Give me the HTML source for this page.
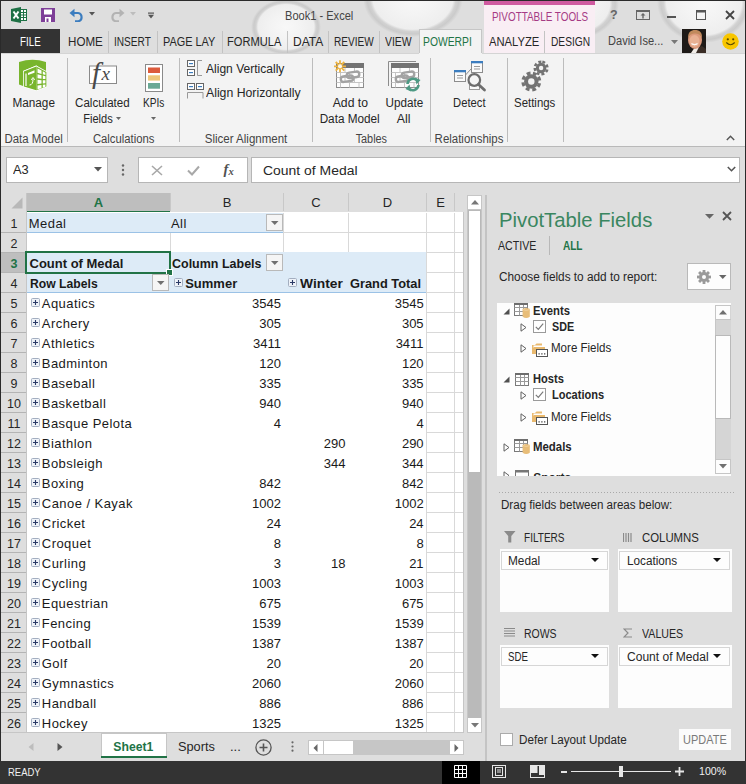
<!DOCTYPE html>
<html><head><meta charset="utf-8"><title>Book1 - Excel</title>
<style>
html,body{margin:0;padding:0;}
body{width:746px;height:784px;position:relative;overflow:hidden;background:#dedede;font-family:"Liberation Sans", sans-serif;}

</style></head><body>
<div style="position:absolute;left:1px;top:147px;width:744px;height:614px;background:#dedede;"></div>
<div style="position:absolute;left:6px;top:157px;width:102px;height:26px;background:#fff;box-sizing:border-box;border:1px solid #b6b6b6;"></div>
<div style="position:absolute;top:164.22px;font-size:12.5px;line-height:12.5px;color:#262626;white-space:pre;left:13px;transform:scaleX(1.0264);transform-origin:0 0;">A3</div>
<svg style="position:absolute;left:94px;top:167px;" width="8" height="5" viewBox="0 0 8 5"><path d="M0 0 H8 L4 4.5 Z" fill="#555"/></svg>
<svg style="position:absolute;left:121px;top:164px;" width="4" height="12" viewBox="0 0 4 12"><circle cx="2" cy="1.5" r="1.2" fill="#666"/><circle cx="2" cy="6" r="1.2" fill="#666"/><circle cx="2" cy="10.5" r="1.2" fill="#666"/></svg>
<div style="position:absolute;left:138px;top:157px;width:110px;height:26px;background:#fff;box-sizing:border-box;border:1px solid #b6b6b6;"></div>
<svg style="position:absolute;left:151px;top:165px;" width="12" height="11" viewBox="0 0 12 11"><path d="M1 1 L11 10 M11 1 L1 10" stroke="#a8a8a8" stroke-width="1.6"/></svg>
<svg style="position:absolute;left:187px;top:165px;" width="13" height="11" viewBox="0 0 13 11"><path d="M1 5.5 L5 9.5 L12 1.5" stroke="#a8a8a8" stroke-width="2" fill="none"/></svg>
<div style="position:absolute;top:162.23px;font-size:14.5px;line-height:14.5px;color:#505050;white-space:pre;font-weight:bold;left:223.5px;font-family:'Liberation Serif', serif;"><i>f</i></div>
<div style="position:absolute;top:166.61px;font-size:10.5px;line-height:10.5px;color:#505050;white-space:pre;font-weight:bold;left:228.5px;font-family:'Liberation Serif', serif;"><i>x</i></div>
<div style="position:absolute;left:251px;top:157px;width:489px;height:26px;background:#fff;box-sizing:border-box;border:1px solid #b6b6b6;"></div>
<div style="position:absolute;top:164.62px;font-size:12.5px;line-height:12.5px;color:#262626;white-space:pre;left:262.8px;transform:scaleX(1.1146);transform-origin:0 0;">Count of Medal</div>
<svg style="position:absolute;left:727px;top:166px;" width="9" height="6" viewBox="0 0 9 6"><path d="M0.8 1 L4.5 4.7 L8.2 1" stroke="#555" stroke-width="1.6" fill="none"/></svg>
<div style="position:absolute;left:1px;top:193px;width:462px;height:19px;background:#dedede;"></div>
<div style="position:absolute;left:1px;top:193px;width:25px;height:19px;background:#dedede;"></div>
<svg style="position:absolute;left:11px;top:197px;" width="12" height="12" viewBox="0 0 12 12"><path d="M11.5 0.5 V11.5 H0.5 Z" fill="#b8b8b8"/></svg>
<div style="position:absolute;left:26px;top:193px;width:144px;height:18px;background:#bebebe;"></div>
<div style="position:absolute;left:1px;top:212px;width:462px;height:1px;background:#b4b4b4;"></div>
<div style="position:absolute;left:26px;top:211px;width:144px;height:2px;background:#217346;"></div>
<div style="position:absolute;left:170px;top:193px;width:1px;height:18px;background:#c8c8c8;"></div>
<div style="position:absolute;left:283px;top:193px;width:1px;height:18px;background:#c8c8c8;"></div>
<div style="position:absolute;left:348px;top:193px;width:1px;height:18px;background:#c8c8c8;"></div>
<div style="position:absolute;left:426px;top:193px;width:1px;height:18px;background:#c8c8c8;"></div>
<div style="position:absolute;left:454px;top:193px;width:1px;height:18px;background:#c8c8c8;"></div>
<div style="position:absolute;left:26px;top:193px;width:1px;height:540px;background:#c6c6c6;"></div>
<div style="position:absolute;top:195.80px;font-size:13px;line-height:13px;color:#217346;white-space:pre;font-weight:bold;left:-201.5px;width:600px;text-align:center;">A</div>
<div style="position:absolute;top:195.80px;font-size:13px;line-height:13px;color:#262626;white-space:pre;left:-73.0px;width:600px;text-align:center;">B</div>
<div style="position:absolute;top:195.80px;font-size:13px;line-height:13px;color:#262626;white-space:pre;left:16.0px;width:600px;text-align:center;">C</div>
<div style="position:absolute;top:195.80px;font-size:13px;line-height:13px;color:#262626;white-space:pre;left:87.5px;width:600px;text-align:center;">D</div>
<div style="position:absolute;top:195.80px;font-size:13px;line-height:13px;color:#262626;white-space:pre;left:140.5px;width:600px;text-align:center;">E</div>
<div style="position:absolute;left:27px;top:212px;width:436px;height:521px;background:#ffffff;"></div>
<div style="position:absolute;left:1px;top:212px;width:25px;height:521px;background:#dedede;"></div>
<div style="position:absolute;left:1px;top:253px;width:25px;height:19px;background:#bebebe;"></div>
<div style="position:absolute;left:1px;top:232px;width:25px;height:1px;background:#b4b4b4;"></div>
<div style="position:absolute;top:218.22px;font-size:12.5px;line-height:12.5px;color:#262626;white-space:pre;left:-286px;width:600px;text-align:center;">1</div>
<div style="position:absolute;left:1px;top:252px;width:25px;height:1px;background:#b4b4b4;"></div>
<div style="position:absolute;top:238.22px;font-size:12.5px;line-height:12.5px;color:#262626;white-space:pre;left:-286px;width:600px;text-align:center;">2</div>
<div style="position:absolute;left:1px;top:272px;width:25px;height:1px;background:#b4b4b4;"></div>
<div style="position:absolute;top:258.22px;font-size:12.5px;line-height:12.5px;color:#217346;white-space:pre;font-weight:bold;left:-286px;width:600px;text-align:center;">3</div>
<div style="position:absolute;left:1px;top:292px;width:25px;height:1px;background:#b4b4b4;"></div>
<div style="position:absolute;top:278.22px;font-size:12.5px;line-height:12.5px;color:#262626;white-space:pre;left:-286px;width:600px;text-align:center;">4</div>
<div style="position:absolute;left:1px;top:312px;width:25px;height:1px;background:#b4b4b4;"></div>
<div style="position:absolute;top:298.22px;font-size:12.5px;line-height:12.5px;color:#262626;white-space:pre;left:-286px;width:600px;text-align:center;">5</div>
<div style="position:absolute;left:1px;top:332px;width:25px;height:1px;background:#b4b4b4;"></div>
<div style="position:absolute;top:318.22px;font-size:12.5px;line-height:12.5px;color:#262626;white-space:pre;left:-286px;width:600px;text-align:center;">6</div>
<div style="position:absolute;left:1px;top:352px;width:25px;height:1px;background:#b4b4b4;"></div>
<div style="position:absolute;top:338.22px;font-size:12.5px;line-height:12.5px;color:#262626;white-space:pre;left:-286px;width:600px;text-align:center;">7</div>
<div style="position:absolute;left:1px;top:372px;width:25px;height:1px;background:#b4b4b4;"></div>
<div style="position:absolute;top:358.22px;font-size:12.5px;line-height:12.5px;color:#262626;white-space:pre;left:-286px;width:600px;text-align:center;">8</div>
<div style="position:absolute;left:1px;top:392px;width:25px;height:1px;background:#b4b4b4;"></div>
<div style="position:absolute;top:378.22px;font-size:12.5px;line-height:12.5px;color:#262626;white-space:pre;left:-286px;width:600px;text-align:center;">9</div>
<div style="position:absolute;left:1px;top:412px;width:25px;height:1px;background:#b4b4b4;"></div>
<div style="position:absolute;top:398.22px;font-size:12.5px;line-height:12.5px;color:#262626;white-space:pre;left:-286px;width:600px;text-align:center;">10</div>
<div style="position:absolute;left:1px;top:432px;width:25px;height:1px;background:#b4b4b4;"></div>
<div style="position:absolute;top:418.22px;font-size:12.5px;line-height:12.5px;color:#262626;white-space:pre;left:-286px;width:600px;text-align:center;">11</div>
<div style="position:absolute;left:1px;top:452px;width:25px;height:1px;background:#b4b4b4;"></div>
<div style="position:absolute;top:438.22px;font-size:12.5px;line-height:12.5px;color:#262626;white-space:pre;left:-286px;width:600px;text-align:center;">12</div>
<div style="position:absolute;left:1px;top:472px;width:25px;height:1px;background:#b4b4b4;"></div>
<div style="position:absolute;top:458.22px;font-size:12.5px;line-height:12.5px;color:#262626;white-space:pre;left:-286px;width:600px;text-align:center;">13</div>
<div style="position:absolute;left:1px;top:492px;width:25px;height:1px;background:#b4b4b4;"></div>
<div style="position:absolute;top:478.22px;font-size:12.5px;line-height:12.5px;color:#262626;white-space:pre;left:-286px;width:600px;text-align:center;">14</div>
<div style="position:absolute;left:1px;top:512px;width:25px;height:1px;background:#b4b4b4;"></div>
<div style="position:absolute;top:498.22px;font-size:12.5px;line-height:12.5px;color:#262626;white-space:pre;left:-286px;width:600px;text-align:center;">15</div>
<div style="position:absolute;left:1px;top:532px;width:25px;height:1px;background:#b4b4b4;"></div>
<div style="position:absolute;top:518.22px;font-size:12.5px;line-height:12.5px;color:#262626;white-space:pre;left:-286px;width:600px;text-align:center;">16</div>
<div style="position:absolute;left:1px;top:552px;width:25px;height:1px;background:#b4b4b4;"></div>
<div style="position:absolute;top:538.22px;font-size:12.5px;line-height:12.5px;color:#262626;white-space:pre;left:-286px;width:600px;text-align:center;">17</div>
<div style="position:absolute;left:1px;top:572px;width:25px;height:1px;background:#b4b4b4;"></div>
<div style="position:absolute;top:558.22px;font-size:12.5px;line-height:12.5px;color:#262626;white-space:pre;left:-286px;width:600px;text-align:center;">18</div>
<div style="position:absolute;left:1px;top:592px;width:25px;height:1px;background:#b4b4b4;"></div>
<div style="position:absolute;top:578.22px;font-size:12.5px;line-height:12.5px;color:#262626;white-space:pre;left:-286px;width:600px;text-align:center;">19</div>
<div style="position:absolute;left:1px;top:612px;width:25px;height:1px;background:#b4b4b4;"></div>
<div style="position:absolute;top:598.22px;font-size:12.5px;line-height:12.5px;color:#262626;white-space:pre;left:-286px;width:600px;text-align:center;">20</div>
<div style="position:absolute;left:1px;top:632px;width:25px;height:1px;background:#b4b4b4;"></div>
<div style="position:absolute;top:618.22px;font-size:12.5px;line-height:12.5px;color:#262626;white-space:pre;left:-286px;width:600px;text-align:center;">21</div>
<div style="position:absolute;left:1px;top:652px;width:25px;height:1px;background:#b4b4b4;"></div>
<div style="position:absolute;top:638.22px;font-size:12.5px;line-height:12.5px;color:#262626;white-space:pre;left:-286px;width:600px;text-align:center;">22</div>
<div style="position:absolute;left:1px;top:672px;width:25px;height:1px;background:#b4b4b4;"></div>
<div style="position:absolute;top:658.22px;font-size:12.5px;line-height:12.5px;color:#262626;white-space:pre;left:-286px;width:600px;text-align:center;">23</div>
<div style="position:absolute;left:1px;top:692px;width:25px;height:1px;background:#b4b4b4;"></div>
<div style="position:absolute;top:678.22px;font-size:12.5px;line-height:12.5px;color:#262626;white-space:pre;left:-286px;width:600px;text-align:center;">24</div>
<div style="position:absolute;left:1px;top:712px;width:25px;height:1px;background:#b4b4b4;"></div>
<div style="position:absolute;top:698.22px;font-size:12.5px;line-height:12.5px;color:#262626;white-space:pre;left:-286px;width:600px;text-align:center;">25</div>
<div style="position:absolute;left:1px;top:732px;width:25px;height:1px;background:#b4b4b4;"></div>
<div style="position:absolute;top:718.22px;font-size:12.5px;line-height:12.5px;color:#262626;white-space:pre;left:-286px;width:600px;text-align:center;">26</div>
<div style="position:absolute;left:283px;top:232px;width:180px;height:1px;background:#d9d9d9;"></div>
<div style="position:absolute;left:27px;top:252px;width:436px;height:1px;background:#d9d9d9;"></div>
<div style="position:absolute;left:427px;top:272px;width:36px;height:1px;background:#d9d9d9;"></div>
<div style="position:absolute;left:427px;top:292px;width:36px;height:1px;background:#d9d9d9;"></div>
<div style="position:absolute;left:427px;top:312px;width:36px;height:1px;background:#d9d9d9;"></div>
<div style="position:absolute;left:427px;top:332px;width:36px;height:1px;background:#d9d9d9;"></div>
<div style="position:absolute;left:427px;top:352px;width:36px;height:1px;background:#d9d9d9;"></div>
<div style="position:absolute;left:427px;top:372px;width:36px;height:1px;background:#d9d9d9;"></div>
<div style="position:absolute;left:427px;top:392px;width:36px;height:1px;background:#d9d9d9;"></div>
<div style="position:absolute;left:427px;top:412px;width:36px;height:1px;background:#d9d9d9;"></div>
<div style="position:absolute;left:427px;top:432px;width:36px;height:1px;background:#d9d9d9;"></div>
<div style="position:absolute;left:427px;top:452px;width:36px;height:1px;background:#d9d9d9;"></div>
<div style="position:absolute;left:427px;top:472px;width:36px;height:1px;background:#d9d9d9;"></div>
<div style="position:absolute;left:427px;top:492px;width:36px;height:1px;background:#d9d9d9;"></div>
<div style="position:absolute;left:427px;top:512px;width:36px;height:1px;background:#d9d9d9;"></div>
<div style="position:absolute;left:427px;top:532px;width:36px;height:1px;background:#d9d9d9;"></div>
<div style="position:absolute;left:427px;top:552px;width:36px;height:1px;background:#d9d9d9;"></div>
<div style="position:absolute;left:427px;top:572px;width:36px;height:1px;background:#d9d9d9;"></div>
<div style="position:absolute;left:427px;top:592px;width:36px;height:1px;background:#d9d9d9;"></div>
<div style="position:absolute;left:427px;top:612px;width:36px;height:1px;background:#d9d9d9;"></div>
<div style="position:absolute;left:427px;top:632px;width:36px;height:1px;background:#d9d9d9;"></div>
<div style="position:absolute;left:427px;top:652px;width:36px;height:1px;background:#d9d9d9;"></div>
<div style="position:absolute;left:427px;top:672px;width:36px;height:1px;background:#d9d9d9;"></div>
<div style="position:absolute;left:427px;top:692px;width:36px;height:1px;background:#d9d9d9;"></div>
<div style="position:absolute;left:427px;top:712px;width:36px;height:1px;background:#d9d9d9;"></div>
<div style="position:absolute;left:427px;top:732px;width:36px;height:1px;background:#d9d9d9;"></div>
<div style="position:absolute;left:170px;top:233px;width:1px;height:19px;background:#d9d9d9;"></div>
<div style="position:absolute;left:283px;top:213px;width:1px;height:39px;background:#d9d9d9;"></div>
<div style="position:absolute;left:348px;top:213px;width:1px;height:39px;background:#d9d9d9;"></div>
<div style="position:absolute;left:426px;top:213px;width:1px;height:39px;background:#d9d9d9;"></div>
<div style="position:absolute;left:426px;top:253px;width:1px;height:480px;background:#d9d9d9;"></div>
<div style="position:absolute;left:454px;top:213px;width:1px;height:520px;background:#d9d9d9;"></div>
<div style="position:absolute;left:27px;top:213px;width:256px;height:19px;background:#ddebf7;"></div>
<div style="position:absolute;left:27px;top:232px;width:256px;height:1px;background:#9bc2e6;"></div>
<div style="position:absolute;left:27px;top:252px;width:399px;height:40px;background:#ddebf7;"></div>
<div style="position:absolute;left:27px;top:292px;width:399px;height:1px;background:#9bc2e6;"></div>
<div style="position:absolute;left:25px;top:251px;width:146px;height:23px;box-sizing:border-box;border:2px solid #217346;"></div>
<div style="position:absolute;left:167px;top:270px;width:5px;height:5px;background:#217346;outline:1px solid #fff;"></div>
<div style="position:absolute;left:266px;top:214px;width:17px;height:17px;background:#f5f5f5;box-sizing:border-box;border:1px solid #b9b9b9;"></div>
<svg style="position:absolute;left:271px;top:221px;" width="8" height="4" viewBox="0 0 8 4"><path d="M0 0 H7.5 L3.75 4 Z" fill="#707070"/></svg>
<div style="position:absolute;left:266px;top:254px;width:17px;height:17px;background:#f5f5f5;box-sizing:border-box;border:1px solid #b9b9b9;"></div>
<svg style="position:absolute;left:271px;top:261px;" width="8" height="4" viewBox="0 0 8 4"><path d="M0 0 H7.5 L3.75 4 Z" fill="#707070"/></svg>
<div style="position:absolute;left:152px;top:274px;width:17px;height:17px;background:#f5f5f5;box-sizing:border-box;border:1px solid #b9b9b9;"></div>
<svg style="position:absolute;left:157px;top:281px;" width="8" height="4" viewBox="0 0 8 4"><path d="M0 0 H7.5 L3.75 4 Z" fill="#707070"/></svg>
<div style="position:absolute;top:216.80px;font-size:13px;line-height:13px;color:#1a1a1a;white-space:pre;letter-spacing:0.45px;left:28.8px;">Medal</div>
<div style="position:absolute;top:216.80px;font-size:13px;line-height:13px;color:#1a1a1a;white-space:pre;letter-spacing:0.45px;left:171px;">All</div>
<div style="position:absolute;top:256.80px;font-size:13px;line-height:13px;color:#1a1a1a;white-space:pre;font-weight:bold;left:29.5px;">Count of Medal</div>
<div style="position:absolute;top:256.80px;font-size:13px;line-height:13px;color:#1a1a1a;white-space:pre;font-weight:bold;left:172.1px;transform:scaleX(0.9604);transform-origin:0 0;">Column Labels</div>
<div style="position:absolute;top:276.80px;font-size:13px;line-height:13px;color:#1a1a1a;white-space:pre;font-weight:bold;left:29.5px;transform:scaleX(0.9370);transform-origin:0 0;">Row Labels</div>
<svg style="position:absolute;left:174px;top:278px;" width="9" height="9" viewBox="0 0 9 9"><rect x="0.5" y="0.5" width="8" height="8" rx="1" fill="#eef2f8" stroke="#a3aec0"/><path d="M2 4.5 H7 M4.5 2 V7" stroke="#2b3a67" stroke-width="1.1"/></svg>
<div style="position:absolute;top:276.80px;font-size:13px;line-height:13px;color:#1a1a1a;white-space:pre;font-weight:bold;left:185.2px;">Summer</div>
<svg style="position:absolute;left:288px;top:278px;" width="9" height="9" viewBox="0 0 9 9"><rect x="0.5" y="0.5" width="8" height="8" rx="1" fill="#eef2f8" stroke="#a3aec0"/><path d="M2 4.5 H7 M4.5 2 V7" stroke="#2b3a67" stroke-width="1.1"/></svg>
<div style="position:absolute;top:276.80px;font-size:13px;line-height:13px;color:#1a1a1a;white-space:pre;font-weight:bold;left:299.7px;transform:scaleX(1.0613);transform-origin:0 0;">Winter</div>
<div style="position:absolute;top:276.80px;font-size:13px;line-height:13px;color:#1a1a1a;white-space:pre;font-weight:bold;right:324.6px;text-align:right;transform:scaleX(0.9863);transform-origin:100% 0;">Grand Total</div>
<svg style="position:absolute;left:31px;top:298px;" width="9" height="9" viewBox="0 0 9 9"><rect x="0.5" y="0.5" width="8" height="8" rx="1" fill="#eef2f8" stroke="#a3aec0"/><path d="M2 4.5 H7 M4.5 2 V7" stroke="#2b3a67" stroke-width="1.1"/></svg>
<div style="position:absolute;top:296.80px;font-size:13px;line-height:13px;color:#1a1a1a;white-space:pre;letter-spacing:0.45px;left:41.8px;">Aquatics</div>
<div style="position:absolute;top:296.80px;font-size:13px;line-height:13px;color:#1a1a1a;white-space:pre;right:465px;text-align:right;">3545</div>
<div style="position:absolute;top:296.80px;font-size:13px;line-height:13px;color:#1a1a1a;white-space:pre;right:322.4px;text-align:right;">3545</div>
<svg style="position:absolute;left:31px;top:318px;" width="9" height="9" viewBox="0 0 9 9"><rect x="0.5" y="0.5" width="8" height="8" rx="1" fill="#eef2f8" stroke="#a3aec0"/><path d="M2 4.5 H7 M4.5 2 V7" stroke="#2b3a67" stroke-width="1.1"/></svg>
<div style="position:absolute;top:316.80px;font-size:13px;line-height:13px;color:#1a1a1a;white-space:pre;letter-spacing:0.45px;left:41.8px;">Archery</div>
<div style="position:absolute;top:316.80px;font-size:13px;line-height:13px;color:#1a1a1a;white-space:pre;right:465px;text-align:right;">305</div>
<div style="position:absolute;top:316.80px;font-size:13px;line-height:13px;color:#1a1a1a;white-space:pre;right:322.4px;text-align:right;">305</div>
<svg style="position:absolute;left:31px;top:338px;" width="9" height="9" viewBox="0 0 9 9"><rect x="0.5" y="0.5" width="8" height="8" rx="1" fill="#eef2f8" stroke="#a3aec0"/><path d="M2 4.5 H7 M4.5 2 V7" stroke="#2b3a67" stroke-width="1.1"/></svg>
<div style="position:absolute;top:336.80px;font-size:13px;line-height:13px;color:#1a1a1a;white-space:pre;letter-spacing:0.45px;left:41.8px;">Athletics</div>
<div style="position:absolute;top:336.80px;font-size:13px;line-height:13px;color:#1a1a1a;white-space:pre;right:465px;text-align:right;">3411</div>
<div style="position:absolute;top:336.80px;font-size:13px;line-height:13px;color:#1a1a1a;white-space:pre;right:322.4px;text-align:right;">3411</div>
<svg style="position:absolute;left:31px;top:358px;" width="9" height="9" viewBox="0 0 9 9"><rect x="0.5" y="0.5" width="8" height="8" rx="1" fill="#eef2f8" stroke="#a3aec0"/><path d="M2 4.5 H7 M4.5 2 V7" stroke="#2b3a67" stroke-width="1.1"/></svg>
<div style="position:absolute;top:356.80px;font-size:13px;line-height:13px;color:#1a1a1a;white-space:pre;letter-spacing:0.45px;left:41.8px;">Badminton</div>
<div style="position:absolute;top:356.80px;font-size:13px;line-height:13px;color:#1a1a1a;white-space:pre;right:465px;text-align:right;">120</div>
<div style="position:absolute;top:356.80px;font-size:13px;line-height:13px;color:#1a1a1a;white-space:pre;right:322.4px;text-align:right;">120</div>
<svg style="position:absolute;left:31px;top:378px;" width="9" height="9" viewBox="0 0 9 9"><rect x="0.5" y="0.5" width="8" height="8" rx="1" fill="#eef2f8" stroke="#a3aec0"/><path d="M2 4.5 H7 M4.5 2 V7" stroke="#2b3a67" stroke-width="1.1"/></svg>
<div style="position:absolute;top:376.80px;font-size:13px;line-height:13px;color:#1a1a1a;white-space:pre;letter-spacing:0.45px;left:41.8px;">Baseball</div>
<div style="position:absolute;top:376.80px;font-size:13px;line-height:13px;color:#1a1a1a;white-space:pre;right:465px;text-align:right;">335</div>
<div style="position:absolute;top:376.80px;font-size:13px;line-height:13px;color:#1a1a1a;white-space:pre;right:322.4px;text-align:right;">335</div>
<svg style="position:absolute;left:31px;top:398px;" width="9" height="9" viewBox="0 0 9 9"><rect x="0.5" y="0.5" width="8" height="8" rx="1" fill="#eef2f8" stroke="#a3aec0"/><path d="M2 4.5 H7 M4.5 2 V7" stroke="#2b3a67" stroke-width="1.1"/></svg>
<div style="position:absolute;top:396.80px;font-size:13px;line-height:13px;color:#1a1a1a;white-space:pre;letter-spacing:0.45px;left:41.8px;">Basketball</div>
<div style="position:absolute;top:396.80px;font-size:13px;line-height:13px;color:#1a1a1a;white-space:pre;right:465px;text-align:right;">940</div>
<div style="position:absolute;top:396.80px;font-size:13px;line-height:13px;color:#1a1a1a;white-space:pre;right:322.4px;text-align:right;">940</div>
<svg style="position:absolute;left:31px;top:418px;" width="9" height="9" viewBox="0 0 9 9"><rect x="0.5" y="0.5" width="8" height="8" rx="1" fill="#eef2f8" stroke="#a3aec0"/><path d="M2 4.5 H7 M4.5 2 V7" stroke="#2b3a67" stroke-width="1.1"/></svg>
<div style="position:absolute;top:416.80px;font-size:13px;line-height:13px;color:#1a1a1a;white-space:pre;letter-spacing:0.45px;left:41.8px;">Basque Pelota</div>
<div style="position:absolute;top:416.80px;font-size:13px;line-height:13px;color:#1a1a1a;white-space:pre;right:465px;text-align:right;">4</div>
<div style="position:absolute;top:416.80px;font-size:13px;line-height:13px;color:#1a1a1a;white-space:pre;right:322.4px;text-align:right;">4</div>
<svg style="position:absolute;left:31px;top:438px;" width="9" height="9" viewBox="0 0 9 9"><rect x="0.5" y="0.5" width="8" height="8" rx="1" fill="#eef2f8" stroke="#a3aec0"/><path d="M2 4.5 H7 M4.5 2 V7" stroke="#2b3a67" stroke-width="1.1"/></svg>
<div style="position:absolute;top:436.80px;font-size:13px;line-height:13px;color:#1a1a1a;white-space:pre;letter-spacing:0.45px;left:41.8px;">Biathlon</div>
<div style="position:absolute;top:436.80px;font-size:13px;line-height:13px;color:#1a1a1a;white-space:pre;right:400.5px;text-align:right;">290</div>
<div style="position:absolute;top:436.80px;font-size:13px;line-height:13px;color:#1a1a1a;white-space:pre;right:322.4px;text-align:right;">290</div>
<svg style="position:absolute;left:31px;top:458px;" width="9" height="9" viewBox="0 0 9 9"><rect x="0.5" y="0.5" width="8" height="8" rx="1" fill="#eef2f8" stroke="#a3aec0"/><path d="M2 4.5 H7 M4.5 2 V7" stroke="#2b3a67" stroke-width="1.1"/></svg>
<div style="position:absolute;top:456.80px;font-size:13px;line-height:13px;color:#1a1a1a;white-space:pre;letter-spacing:0.45px;left:41.8px;">Bobsleigh</div>
<div style="position:absolute;top:456.80px;font-size:13px;line-height:13px;color:#1a1a1a;white-space:pre;right:400.5px;text-align:right;">344</div>
<div style="position:absolute;top:456.80px;font-size:13px;line-height:13px;color:#1a1a1a;white-space:pre;right:322.4px;text-align:right;">344</div>
<svg style="position:absolute;left:31px;top:478px;" width="9" height="9" viewBox="0 0 9 9"><rect x="0.5" y="0.5" width="8" height="8" rx="1" fill="#eef2f8" stroke="#a3aec0"/><path d="M2 4.5 H7 M4.5 2 V7" stroke="#2b3a67" stroke-width="1.1"/></svg>
<div style="position:absolute;top:476.80px;font-size:13px;line-height:13px;color:#1a1a1a;white-space:pre;letter-spacing:0.45px;left:41.8px;">Boxing</div>
<div style="position:absolute;top:476.80px;font-size:13px;line-height:13px;color:#1a1a1a;white-space:pre;right:465px;text-align:right;">842</div>
<div style="position:absolute;top:476.80px;font-size:13px;line-height:13px;color:#1a1a1a;white-space:pre;right:322.4px;text-align:right;">842</div>
<svg style="position:absolute;left:31px;top:498px;" width="9" height="9" viewBox="0 0 9 9"><rect x="0.5" y="0.5" width="8" height="8" rx="1" fill="#eef2f8" stroke="#a3aec0"/><path d="M2 4.5 H7 M4.5 2 V7" stroke="#2b3a67" stroke-width="1.1"/></svg>
<div style="position:absolute;top:496.80px;font-size:13px;line-height:13px;color:#1a1a1a;white-space:pre;letter-spacing:0.45px;left:41.8px;">Canoe / Kayak</div>
<div style="position:absolute;top:496.80px;font-size:13px;line-height:13px;color:#1a1a1a;white-space:pre;right:465px;text-align:right;">1002</div>
<div style="position:absolute;top:496.80px;font-size:13px;line-height:13px;color:#1a1a1a;white-space:pre;right:322.4px;text-align:right;">1002</div>
<svg style="position:absolute;left:31px;top:518px;" width="9" height="9" viewBox="0 0 9 9"><rect x="0.5" y="0.5" width="8" height="8" rx="1" fill="#eef2f8" stroke="#a3aec0"/><path d="M2 4.5 H7 M4.5 2 V7" stroke="#2b3a67" stroke-width="1.1"/></svg>
<div style="position:absolute;top:516.80px;font-size:13px;line-height:13px;color:#1a1a1a;white-space:pre;letter-spacing:0.45px;left:41.8px;">Cricket</div>
<div style="position:absolute;top:516.80px;font-size:13px;line-height:13px;color:#1a1a1a;white-space:pre;right:465px;text-align:right;">24</div>
<div style="position:absolute;top:516.80px;font-size:13px;line-height:13px;color:#1a1a1a;white-space:pre;right:322.4px;text-align:right;">24</div>
<svg style="position:absolute;left:31px;top:538px;" width="9" height="9" viewBox="0 0 9 9"><rect x="0.5" y="0.5" width="8" height="8" rx="1" fill="#eef2f8" stroke="#a3aec0"/><path d="M2 4.5 H7 M4.5 2 V7" stroke="#2b3a67" stroke-width="1.1"/></svg>
<div style="position:absolute;top:536.80px;font-size:13px;line-height:13px;color:#1a1a1a;white-space:pre;letter-spacing:0.45px;left:41.8px;">Croquet</div>
<div style="position:absolute;top:536.80px;font-size:13px;line-height:13px;color:#1a1a1a;white-space:pre;right:465px;text-align:right;">8</div>
<div style="position:absolute;top:536.80px;font-size:13px;line-height:13px;color:#1a1a1a;white-space:pre;right:322.4px;text-align:right;">8</div>
<svg style="position:absolute;left:31px;top:558px;" width="9" height="9" viewBox="0 0 9 9"><rect x="0.5" y="0.5" width="8" height="8" rx="1" fill="#eef2f8" stroke="#a3aec0"/><path d="M2 4.5 H7 M4.5 2 V7" stroke="#2b3a67" stroke-width="1.1"/></svg>
<div style="position:absolute;top:556.80px;font-size:13px;line-height:13px;color:#1a1a1a;white-space:pre;letter-spacing:0.45px;left:41.8px;">Curling</div>
<div style="position:absolute;top:556.80px;font-size:13px;line-height:13px;color:#1a1a1a;white-space:pre;right:465px;text-align:right;">3</div>
<div style="position:absolute;top:556.80px;font-size:13px;line-height:13px;color:#1a1a1a;white-space:pre;right:400.5px;text-align:right;">18</div>
<div style="position:absolute;top:556.80px;font-size:13px;line-height:13px;color:#1a1a1a;white-space:pre;right:322.4px;text-align:right;">21</div>
<svg style="position:absolute;left:31px;top:578px;" width="9" height="9" viewBox="0 0 9 9"><rect x="0.5" y="0.5" width="8" height="8" rx="1" fill="#eef2f8" stroke="#a3aec0"/><path d="M2 4.5 H7 M4.5 2 V7" stroke="#2b3a67" stroke-width="1.1"/></svg>
<div style="position:absolute;top:576.80px;font-size:13px;line-height:13px;color:#1a1a1a;white-space:pre;letter-spacing:0.45px;left:41.8px;">Cycling</div>
<div style="position:absolute;top:576.80px;font-size:13px;line-height:13px;color:#1a1a1a;white-space:pre;right:465px;text-align:right;">1003</div>
<div style="position:absolute;top:576.80px;font-size:13px;line-height:13px;color:#1a1a1a;white-space:pre;right:322.4px;text-align:right;">1003</div>
<svg style="position:absolute;left:31px;top:598px;" width="9" height="9" viewBox="0 0 9 9"><rect x="0.5" y="0.5" width="8" height="8" rx="1" fill="#eef2f8" stroke="#a3aec0"/><path d="M2 4.5 H7 M4.5 2 V7" stroke="#2b3a67" stroke-width="1.1"/></svg>
<div style="position:absolute;top:596.80px;font-size:13px;line-height:13px;color:#1a1a1a;white-space:pre;letter-spacing:0.45px;left:41.8px;">Equestrian</div>
<div style="position:absolute;top:596.80px;font-size:13px;line-height:13px;color:#1a1a1a;white-space:pre;right:465px;text-align:right;">675</div>
<div style="position:absolute;top:596.80px;font-size:13px;line-height:13px;color:#1a1a1a;white-space:pre;right:322.4px;text-align:right;">675</div>
<svg style="position:absolute;left:31px;top:618px;" width="9" height="9" viewBox="0 0 9 9"><rect x="0.5" y="0.5" width="8" height="8" rx="1" fill="#eef2f8" stroke="#a3aec0"/><path d="M2 4.5 H7 M4.5 2 V7" stroke="#2b3a67" stroke-width="1.1"/></svg>
<div style="position:absolute;top:616.80px;font-size:13px;line-height:13px;color:#1a1a1a;white-space:pre;letter-spacing:0.45px;left:41.8px;">Fencing</div>
<div style="position:absolute;top:616.80px;font-size:13px;line-height:13px;color:#1a1a1a;white-space:pre;right:465px;text-align:right;">1539</div>
<div style="position:absolute;top:616.80px;font-size:13px;line-height:13px;color:#1a1a1a;white-space:pre;right:322.4px;text-align:right;">1539</div>
<svg style="position:absolute;left:31px;top:638px;" width="9" height="9" viewBox="0 0 9 9"><rect x="0.5" y="0.5" width="8" height="8" rx="1" fill="#eef2f8" stroke="#a3aec0"/><path d="M2 4.5 H7 M4.5 2 V7" stroke="#2b3a67" stroke-width="1.1"/></svg>
<div style="position:absolute;top:636.80px;font-size:13px;line-height:13px;color:#1a1a1a;white-space:pre;letter-spacing:0.45px;left:41.8px;">Football</div>
<div style="position:absolute;top:636.80px;font-size:13px;line-height:13px;color:#1a1a1a;white-space:pre;right:465px;text-align:right;">1387</div>
<div style="position:absolute;top:636.80px;font-size:13px;line-height:13px;color:#1a1a1a;white-space:pre;right:322.4px;text-align:right;">1387</div>
<svg style="position:absolute;left:31px;top:658px;" width="9" height="9" viewBox="0 0 9 9"><rect x="0.5" y="0.5" width="8" height="8" rx="1" fill="#eef2f8" stroke="#a3aec0"/><path d="M2 4.5 H7 M4.5 2 V7" stroke="#2b3a67" stroke-width="1.1"/></svg>
<div style="position:absolute;top:656.80px;font-size:13px;line-height:13px;color:#1a1a1a;white-space:pre;letter-spacing:0.45px;left:41.8px;">Golf</div>
<div style="position:absolute;top:656.80px;font-size:13px;line-height:13px;color:#1a1a1a;white-space:pre;right:465px;text-align:right;">20</div>
<div style="position:absolute;top:656.80px;font-size:13px;line-height:13px;color:#1a1a1a;white-space:pre;right:322.4px;text-align:right;">20</div>
<svg style="position:absolute;left:31px;top:678px;" width="9" height="9" viewBox="0 0 9 9"><rect x="0.5" y="0.5" width="8" height="8" rx="1" fill="#eef2f8" stroke="#a3aec0"/><path d="M2 4.5 H7 M4.5 2 V7" stroke="#2b3a67" stroke-width="1.1"/></svg>
<div style="position:absolute;top:676.80px;font-size:13px;line-height:13px;color:#1a1a1a;white-space:pre;letter-spacing:0.45px;left:41.8px;">Gymnastics</div>
<div style="position:absolute;top:676.80px;font-size:13px;line-height:13px;color:#1a1a1a;white-space:pre;right:465px;text-align:right;">2060</div>
<div style="position:absolute;top:676.80px;font-size:13px;line-height:13px;color:#1a1a1a;white-space:pre;right:322.4px;text-align:right;">2060</div>
<svg style="position:absolute;left:31px;top:698px;" width="9" height="9" viewBox="0 0 9 9"><rect x="0.5" y="0.5" width="8" height="8" rx="1" fill="#eef2f8" stroke="#a3aec0"/><path d="M2 4.5 H7 M4.5 2 V7" stroke="#2b3a67" stroke-width="1.1"/></svg>
<div style="position:absolute;top:696.80px;font-size:13px;line-height:13px;color:#1a1a1a;white-space:pre;letter-spacing:0.45px;left:41.8px;">Handball</div>
<div style="position:absolute;top:696.80px;font-size:13px;line-height:13px;color:#1a1a1a;white-space:pre;right:465px;text-align:right;">886</div>
<div style="position:absolute;top:696.80px;font-size:13px;line-height:13px;color:#1a1a1a;white-space:pre;right:322.4px;text-align:right;">886</div>
<svg style="position:absolute;left:31px;top:718px;" width="9" height="9" viewBox="0 0 9 9"><rect x="0.5" y="0.5" width="8" height="8" rx="1" fill="#eef2f8" stroke="#a3aec0"/><path d="M2 4.5 H7 M4.5 2 V7" stroke="#2b3a67" stroke-width="1.1"/></svg>
<div style="position:absolute;top:716.80px;font-size:13px;line-height:13px;color:#1a1a1a;white-space:pre;letter-spacing:0.45px;left:41.8px;">Hockey</div>
<div style="position:absolute;top:716.80px;font-size:13px;line-height:13px;color:#1a1a1a;white-space:pre;right:465px;text-align:right;">1325</div>
<div style="position:absolute;top:716.80px;font-size:13px;line-height:13px;color:#1a1a1a;white-space:pre;right:322.4px;text-align:right;">1325</div>
<div style="position:absolute;left:463px;top:212px;width:1px;height:521px;background:#c6c6c6;"></div>
<div style="position:absolute;left:1px;top:732px;width:463px;height:1px;background:#c6c6c6;"></div>
<div style="position:absolute;left:467px;top:195px;width:15px;height:538px;background:#fff;box-sizing:border-box;border:1px solid #c6c6c6;"></div>
<div style="position:absolute;left:468px;top:209px;width:13px;height:1px;background:#c6c6c6;"></div>
<svg style="position:absolute;left:471px;top:200px;" width="8" height="5" viewBox="0 0 8 5"><path d="M0 4.5 H8 L4 0 Z" fill="#777"/></svg>
<div style="position:absolute;left:468px;top:210px;width:13px;height:508px;background:#fff;"></div>
<div style="position:absolute;left:468px;top:210px;width:13px;height:263px;background:#fff;box-sizing:border-box;border:1px solid #b9b9b9;"></div>
<div style="position:absolute;left:468px;top:473px;width:13px;height:245px;background:#bababa;"></div>
<svg style="position:absolute;left:471px;top:723px;" width="8" height="5" viewBox="0 0 8 5"><path d="M0 0 H8 L4 4.5 Z" fill="#777"/></svg>
<div style="position:absolute;left:485px;top:195px;width:2px;height:566px;background:#c4c4c4;"></div>
<div style="position:absolute;left:0px;top:0px;width:746px;height:53px;background:#dedede;"></div>
<div style="position:absolute;left:251px;top:-1px;width:70px;height:56px;border-radius:50%;background:radial-gradient(closest-side, #f8f8f8 0%, #f3f3f3 45%, #eeeeee 80%, #d2d2d2 86%, #cbcbcb 92%, rgba(220,220,220,0) 100%);"></div>
<div style="position:absolute;left:363px;top:-41px;width:100px;height:78px;border-radius:50%;background:radial-gradient(closest-side, #f8f8f8 0%, #f3f3f3 45%, #eeeeee 80%, #d2d2d2 86%, #cbcbcb 92%, rgba(220,220,220,0) 100%);"></div>
<div style="position:absolute;left:657px;top:-39px;width:94px;height:82px;border-radius:50%;background:radial-gradient(closest-side, #f8f8f8 0%, #f3f3f3 45%, #eeeeee 80%, #d2d2d2 86%, #cbcbcb 92%, rgba(220,220,220,0) 100%);"></div>
<div style="position:absolute;left:525px;top:-32px;width:94px;height:72px;border-radius:50%;background:radial-gradient(closest-side, #f8f8f8 0%, #f3f3f3 45%, #eeeeee 80%, #d2d2d2 86%, #cbcbcb 92%, rgba(220,220,220,0) 100%);"></div>
<div style="position:absolute;left:0px;top:0px;width:746px;height:1px;background:#2a2a2a;"></div>
<div style="position:absolute;left:0px;top:0px;width:1px;height:784px;background:#2a2a2a;"></div>
<div style="position:absolute;left:745px;top:0px;width:1px;height:784px;background:#2a2a2a;"></div>
<div style="position:absolute;left:484px;top:1px;width:111px;height:52px;background:#f9eef4;"></div>
<div style="position:absolute;left:484px;top:1px;width:111px;height:4px;background:#cf5aa0;"></div>
<div style="position:absolute;top:10.64px;font-size:12px;line-height:12px;color:#a53a84;white-space:pre;left:491.5px;transform:scaleX(0.8242);transform-origin:0 0;">PIVOTTABLE TOOLS</div>
<div style="position:absolute;top:9.82px;font-size:12.5px;line-height:12.5px;color:#444444;white-space:pre;left:284.7px;transform:scaleX(0.8856);transform-origin:0 0;">Book1 - Excel</div>
<svg style="position:absolute;left:11px;top:7px;" width="16" height="16" viewBox="0 0 16 16"><path d="M0 2 L10 0 L10 16 L0 14 Z" fill="#1e7145"/><rect x="9" y="2" width="7" height="12" fill="#1e7145"/><rect x="10" y="3" width="5" height="10" fill="#fff"/><path d="M10 5.5h5M10 8h5M10 10.5h5M12.5 3v10" stroke="#1e7145" stroke-width="1"/><path d="M2.5 4.5 L7.5 11.5 M7.5 4.5 L2.5 11.5" stroke="#fff" stroke-width="2"/></svg>
<svg style="position:absolute;left:41px;top:8px;" width="14" height="14" viewBox="0 0 14 14"><rect x="0" y="0" width="14" height="14" fill="#7e3f98"/><rect x="3" y="1.5" width="8" height="5" fill="#fff"/><rect x="4" y="9" width="6" height="5" fill="#fff"/><rect x="5.5" y="10.5" width="2" height="3.5" fill="#7e3f98"/></svg>
<svg style="position:absolute;left:69px;top:8px;" width="16" height="14" viewBox="0 0 16 14"><path d="M2.5 5 H9 A4.2 4.2 0 0 1 9 13.3 H6" fill="none" stroke="#3c7dbf" stroke-width="2.2"/><path d="M0.5 5 L5.5 0.8 V9.2 Z" fill="#3c7dbf"/></svg>
<svg style="position:absolute;left:89px;top:12px;" width="7" height="4" viewBox="0 0 7 4"><path d="M0 0 H6 L3 3.5 Z" fill="#555"/></svg>
<svg style="position:absolute;left:110px;top:8px;" width="15" height="14" viewBox="0 0 15 14"><path d="M12.5 5 H6 A4.2 4.2 0 0 0 6 13.3 H9" fill="none" stroke="#b3b3b3" stroke-width="2.2"/><path d="M14.5 5 L9.5 0.8 V9.2 Z" fill="#b3b3b3"/></svg>
<svg style="position:absolute;left:130px;top:12px;" width="6" height="4" viewBox="0 0 6 4"><path d="M0 0 H6 L3 3.5 Z" fill="#bdbdbd"/></svg>
<svg style="position:absolute;left:148px;top:12px;" width="6" height="7" viewBox="0 0 6 7"><rect x="0" y="0.5" width="6" height="1.2" fill="#555"/><path d="M0 2.8 H6 L3 6.5 Z" fill="#555"/></svg>
<div style="position:absolute;top:8.92px;font-size:12.5px;line-height:12.5px;color:#666;white-space:pre;font-weight:bold;left:610px;">?</div>
<svg style="position:absolute;left:636px;top:10px;" width="14" height="10" viewBox="0 0 14 10"><rect x="0.5" y="0.5" width="13" height="9" fill="none" stroke="#666" stroke-width="1"/><rect x="0.5" y="0.5" width="13" height="1.5" fill="#666"/><path d="M7 3 L4.5 5.5 H6.3 V8.5 H7.7 V5.5 H9.5 Z" fill="#666"/></svg>
<div style="position:absolute;left:667px;top:16px;width:9px;height:2px;background:#555;"></div>
<svg style="position:absolute;left:696px;top:10px;" width="10" height="10" viewBox="0 0 10 10"><rect x="0.5" y="0.5" width="9" height="9" fill="none" stroke="#555" stroke-width="1"/><rect x="0" y="0" width="10" height="2.5" fill="#555"/></svg>
<svg style="position:absolute;left:725px;top:10px;" width="10" height="10" viewBox="0 0 10 10"><path d="M1 1 L9 9 M9 1 L1 9" stroke="#444" stroke-width="1.8"/></svg>
<div style="position:absolute;left:1px;top:29px;width:59px;height:24px;background:#333333;"></div>
<div style="position:absolute;top:35.52px;font-size:12.5px;line-height:12.5px;color:#ffffff;white-space:pre;left:20.4px;transform:scaleX(0.7839);transform-origin:0 0;">FILE</div>
<div style="position:absolute;top:35.52px;font-size:12.5px;line-height:12.5px;color:#262626;white-space:pre;left:68px;transform:scaleX(0.9280);transform-origin:0 0;">HOME</div>
<div style="position:absolute;top:35.52px;font-size:12.5px;line-height:12.5px;color:#262626;white-space:pre;left:114.2px;transform:scaleX(0.8066);transform-origin:0 0;">INSERT</div>
<div style="position:absolute;top:35.52px;font-size:12.5px;line-height:12.5px;color:#262626;white-space:pre;left:162.5px;transform:scaleX(0.8719);transform-origin:0 0;">PAGE LAY</div>
<div style="position:absolute;top:35.52px;font-size:12.5px;line-height:12.5px;color:#262626;white-space:pre;left:227.4px;transform:scaleX(0.8883);transform-origin:0 0;">FORMULA</div>
<div style="position:absolute;top:35.52px;font-size:12.5px;line-height:12.5px;color:#262626;white-space:pre;left:292.5px;transform:scaleX(0.9624);transform-origin:0 0;">DATA</div>
<div style="position:absolute;top:35.52px;font-size:12.5px;line-height:12.5px;color:#262626;white-space:pre;left:334.3px;transform:scaleX(0.8051);transform-origin:0 0;">REVIEW</div>
<div style="position:absolute;top:35.52px;font-size:12.5px;line-height:12.5px;color:#262626;white-space:pre;left:385px;transform:scaleX(0.8356);transform-origin:0 0;">VIEW</div>
<div style="position:absolute;left:108px;top:31px;width:1px;height:22px;background:#c3c3c3;"></div>
<div style="position:absolute;left:157px;top:31px;width:1px;height:22px;background:#c3c3c3;"></div>
<div style="position:absolute;left:222px;top:31px;width:1px;height:22px;background:#c3c3c3;"></div>
<div style="position:absolute;left:287px;top:31px;width:1px;height:22px;background:#c3c3c3;"></div>
<div style="position:absolute;left:328px;top:31px;width:1px;height:22px;background:#c3c3c3;"></div>
<div style="position:absolute;left:379px;top:31px;width:1px;height:22px;background:#c3c3c3;"></div>
<div style="position:absolute;left:544px;top:31px;width:1px;height:22px;background:#c3c3c3;"></div>
<div style="position:absolute;left:419px;top:29px;width:63px;height:26px;background:#f3f3f3;box-sizing:border-box;border:1px solid #c6c6c6;border-bottom:none;"></div>
<div style="position:absolute;top:35.52px;font-size:12.5px;line-height:12.5px;color:#217346;white-space:pre;left:422.5px;transform:scaleX(0.8265);transform-origin:0 0;">POWERPI</div>
<div style="position:absolute;top:35.52px;font-size:12.5px;line-height:12.5px;color:#262626;white-space:pre;left:488.5px;transform:scaleX(0.8975);transform-origin:0 0;">ANALYZE</div>
<div style="position:absolute;top:35.52px;font-size:12.5px;line-height:12.5px;color:#262626;white-space:pre;left:550.7px;transform:scaleX(0.8136);transform-origin:0 0;">DESIGN</div>
<div style="position:absolute;top:34.92px;font-size:12.5px;line-height:12.5px;color:#444;white-space:pre;left:607.5px;transform:scaleX(0.8844);transform-origin:0 0;">David Ise...</div>
<svg style="position:absolute;left:671px;top:40px;" width="7" height="4" viewBox="0 0 7 4"><path d="M0 0 H7 L3.5 4 Z" fill="#777"/></svg>
<svg style="position:absolute;left:682px;top:29px;" width="24" height="24" viewBox="0 0 24 24"><rect width="24" height="24" fill="#1e1a17"/><path d="M9 24 L13 19 L20 17 L24 20 V24 Z" fill="#3a2d26"/><path d="M9 24 L12 19.5 L17 18 L14 24 Z" fill="#f1ede8"/><ellipse cx="13" cy="11" rx="7" ry="9" fill="#dc9a7c"/><ellipse cx="12.5" cy="12" rx="5" ry="6" fill="#e8b193"/><path d="M6 9 C6 3 9 1 13 1 C17.5 1 20.5 3.5 20 9 C18.5 5.5 16 4.5 13 4.5 C10 4.5 7.5 5.5 6 9 Z" fill="#c08a5c"/><path d="M9.5 14.8 Q12.5 17 15.5 14.8 Q12.5 16 9.5 14.8 Z" fill="#fff" stroke="#fff" stroke-width="0.8"/></svg>
<svg style="position:absolute;left:722px;top:33px;" width="17" height="17" viewBox="0 0 17 17"><circle cx="8.5" cy="8.5" r="8.3" fill="#f8c600"/><circle cx="5.8" cy="6.3" r="1.1" fill="#5a4a00"/><circle cx="11.2" cy="6.3" r="1.1" fill="#5a4a00"/><path d="M4.3 9.5 Q8.5 14 12.7 9.5" stroke="#5a4a00" stroke-width="1.1" fill="none"/></svg>
<div style="position:absolute;left:1px;top:53px;width:744px;height:93px;background:#f3f3f3;"></div>
<div style="position:absolute;left:1px;top:53px;width:418px;height:1px;background:#d4d4d4;"></div>
<div style="position:absolute;left:482px;top:53px;width:263px;height:1px;background:#d4d4d4;"></div>
<div style="position:absolute;left:1px;top:146px;width:744px;height:1px;background:#b9b9b9;"></div>
<div style="position:absolute;left:67px;top:58px;width:1px;height:84px;background:#bcbcbc;"></div>
<div style="position:absolute;left:179px;top:58px;width:1px;height:84px;background:#bcbcbc;"></div>
<div style="position:absolute;left:312px;top:58px;width:1px;height:84px;background:#bcbcbc;"></div>
<div style="position:absolute;left:430px;top:58px;width:1px;height:84px;background:#bcbcbc;"></div>
<div style="position:absolute;left:507px;top:58px;width:1px;height:84px;background:#bcbcbc;"></div>
<div style="position:absolute;left:563px;top:58px;width:1px;height:84px;background:#bcbcbc;"></div>
<div style="position:absolute;top:132.64px;font-size:12px;line-height:12px;color:#444;white-space:pre;left:-266.1px;width:600px;text-align:center;"><span style="display:inline-block;transform:scaleX(0.9499);transform-origin:50% 0">Data Model</span></div>
<div style="position:absolute;top:132.64px;font-size:12px;line-height:12px;color:#444;white-space:pre;left:-176.5px;width:600px;text-align:center;"><span style="display:inline-block;transform:scaleX(0.9423);transform-origin:50% 0">Calculations</span></div>
<div style="position:absolute;top:132.64px;font-size:12px;line-height:12px;color:#444;white-space:pre;left:-54.30000000000001px;width:600px;text-align:center;"><span style="display:inline-block;transform:scaleX(0.9599);transform-origin:50% 0">Slicer Alignment</span></div>
<div style="position:absolute;top:132.64px;font-size:12px;line-height:12px;color:#444;white-space:pre;left:71px;width:600px;text-align:center;"><span style="display:inline-block;transform:scaleX(0.9052);transform-origin:50% 0">Tables</span></div>
<div style="position:absolute;top:132.64px;font-size:12px;line-height:12px;color:#444;white-space:pre;left:169.10000000000002px;width:600px;text-align:center;"><span style="display:inline-block;transform:scaleX(0.9549);transform-origin:50% 0">Relationships</span></div>
<div style="position:absolute;top:96.84px;font-size:12px;line-height:12px;color:#262626;white-space:pre;left:-266.25px;width:600px;text-align:center;"><span style="display:inline-block;transform:scaleX(0.9798);transform-origin:50% 0">Manage</span></div>
<div style="position:absolute;top:96.84px;font-size:12px;line-height:12px;color:#262626;white-space:pre;left:-198px;width:600px;text-align:center;"><span style="display:inline-block;transform:scaleX(0.9629);transform-origin:50% 0">Calculated</span></div>
<div style="position:absolute;top:113.24px;font-size:12px;line-height:12px;color:#262626;white-space:pre;left:-201.75px;width:600px;text-align:center;"><span style="display:inline-block;transform:scaleX(0.9214);transform-origin:50% 0">Fields</span></div>
<svg style="position:absolute;left:116px;top:117px;" width="5" height="3" viewBox="0 0 5 3"><path d="M0 0 H5 L2.5 3 Z" fill="#666"/></svg>
<div style="position:absolute;top:96.84px;font-size:12px;line-height:12px;color:#262626;white-space:pre;left:-146px;width:600px;text-align:center;"><span style="display:inline-block;transform:scaleX(0.8444);transform-origin:50% 0">KPIs</span></div>
<svg style="position:absolute;left:151px;top:117px;" width="5" height="3" viewBox="0 0 5 3"><path d="M0 0 H5 L2.5 3 Z" fill="#666"/></svg>
<div style="position:absolute;top:63.44px;font-size:12px;line-height:12px;color:#262626;white-space:pre;left:206.3px;transform:scaleX(1.0045);transform-origin:0 0;">Align Vertically</div>
<div style="position:absolute;top:86.84px;font-size:12px;line-height:12px;color:#262626;white-space:pre;left:206.3px;transform:scaleX(1.0214);transform-origin:0 0;">Align Horizontally</div>
<div style="position:absolute;top:96.84px;font-size:12px;line-height:12px;color:#262626;white-space:pre;left:49.89999999999998px;width:600px;text-align:center;"><span style="display:inline-block;transform:scaleX(1.0143);transform-origin:50% 0">Add to</span></div>
<div style="position:absolute;top:113.24px;font-size:12px;line-height:12px;color:#262626;white-space:pre;left:49.64999999999998px;width:600px;text-align:center;"><span style="display:inline-block;transform:scaleX(0.9792);transform-origin:50% 0">Data Model</span></div>
<div style="position:absolute;top:96.84px;font-size:12px;line-height:12px;color:#262626;white-space:pre;left:104.14999999999998px;width:600px;text-align:center;"><span style="display:inline-block;transform:scaleX(0.9741);transform-origin:50% 0">Update</span></div>
<div style="position:absolute;top:113.24px;font-size:12px;line-height:12px;color:#262626;white-space:pre;left:103.85000000000002px;width:600px;text-align:center;"><span style="display:inline-block;transform:scaleX(1.0267);transform-origin:50% 0">All</span></div>
<div style="position:absolute;top:96.84px;font-size:12px;line-height:12px;color:#262626;white-space:pre;left:169.05px;width:600px;text-align:center;"><span style="display:inline-block;transform:scaleX(0.9369);transform-origin:50% 0">Detect</span></div>
<div style="position:absolute;top:96.84px;font-size:12px;line-height:12px;color:#262626;white-space:pre;left:235.14999999999998px;width:600px;text-align:center;"><span style="display:inline-block;transform:scaleX(0.9525);transform-origin:50% 0">Settings</span></div>
<svg style="position:absolute;left:726px;top:135px;" width="9" height="6" viewBox="0 0 9 6"><path d="M0.8 5 L4.5 1.3 L8.2 5" stroke="#555" stroke-width="1.4" fill="none"/></svg>
<svg style="position:absolute;left:15px;top:57px;" width="36" height="36" viewBox="0 0 36 36"><path d="M4 5 Q17.5 0.5 31 5 V16 L21.3 8.5 L8 14 V29 L4 27.5 Z" fill="#78b52d"/>
<path d="M8 14 L21.3 8.5 L32.1 14.5 V30 L21.3 34 L8 30 Z" fill="#fff"/>
<path d="M8.8 14.6 L21.3 9.4 V33.2 L8.8 29.5 Z" fill="#78b52d"/>
<path d="M21.3 9.4 L31.4 15 V29.6 L21.3 33.2 Z" fill="#78b52d"/>
<path d="M22.5 11.5 L26.5 13.6 V17 L22.5 15.8 Z M27.8 14.3 L30.4 15.7 V18 L27.8 17.3 Z M22.5 17.3 L26.5 18.3 V21.8 L22.5 21.3 Z M27.8 18.6 L30.4 19.2 V22.1 L27.8 22 Z M22.5 22.8 L26.5 23.2 V26.6 L22.5 27 Z M27.8 23.3 L30.4 23.3 V26.3 L27.8 26.6 Z M22.5 28.5 L26.5 28 V31.2 L22.5 32.3 Z M27.8 27.8 L30.4 27.5 V29.8 L27.8 30.8 Z" fill="#fff"/>
<path d="M11 16.5 V29" stroke="#fff" stroke-width="1.2"/>
<path d="M13 16 L19.5 13.3 V15.8 L13 18 Z" fill="#fff"/>
<path d="M14.5 28 Q18 28 18 22 M16.3 22.8 L18 20.5 L19.7 22.8" stroke="#fff" stroke-width="1" fill="none"/></svg>
<svg style="position:absolute;left:88px;top:58px;" width="30" height="31" viewBox="0 0 30 31"><rect x="1.5" y="8" width="27" height="17.5" fill="#fff" stroke="#8a8a8a" stroke-width="1"/>
<text x="4" y="25" font-family="Liberation Serif" font-style="italic" font-size="29" fill="#4a4a4a">f</text>
<text x="13.5" y="22" font-family="Liberation Serif" font-style="italic" font-size="19" fill="#4a4a4a">x</text></svg>
<svg style="position:absolute;left:145px;top:64px;" width="18" height="28" viewBox="0 0 18 28"><rect x="0.5" y="0.5" width="17" height="27" fill="#fff" stroke="#8a8a8a" stroke-width="1"/>
<rect x="3" y="3.5" width="12" height="5.5" fill="#dc5b3c"/><rect x="3" y="11.3" width="12" height="5.3" fill="#eec77a"/><rect x="3" y="19" width="12" height="5.7" fill="#6aa995"/></svg>
<svg style="position:absolute;left:187px;top:60px;" width="17" height="17" viewBox="0 0 17 17"><rect x="0.5" y="0.5" width="7" height="6" fill="#fff" stroke="#666"/><rect x="2" y="3" width="4" height="1.2" fill="#3c7dbf"/>
<rect x="0.5" y="9.5" width="7" height="6" fill="#fff" stroke="#666"/><rect x="2" y="12" width="4" height="1.2" fill="#3c7dbf"/>
<path d="M15 0.5 H10.5 V15.5 H15" fill="none" stroke="#999"/></svg>
<svg style="position:absolute;left:187px;top:83px;" width="17" height="16" viewBox="0 0 17 16"><rect x="0.5" y="0.5" width="7" height="6" fill="#fff" stroke="#666"/><rect x="2" y="3" width="4" height="1.2" fill="#3c7dbf"/>
<rect x="9.5" y="0.5" width="7" height="6" fill="#fff" stroke="#666"/><rect x="11" y="3" width="4" height="1.2" fill="#3c7dbf"/>
<path d="M0.5 15.5 V9.5 H16 V15.5" fill="none" stroke="#999"/></svg>
<svg style="position:absolute;left:333px;top:59px;" width="32" height="30" viewBox="0 0 32 30"><g transform="translate(3,4)"><rect x="0.5" y="0.5" width="27" height="24" fill="#fdfdfd" stroke="#8c8c8c"/><rect x="0" y="0" width="28" height="5" fill="#737373"/>
<path d="M0.5 9.5 H27.5 M0.5 14.5 H27.5 M0.5 19.5 H27.5 M9 5 V9.5 M18.5 5 V9.5 M4.5 9.5 V14.5 M13.5 9.5 V14.5 M23 9.5 V14.5 M9 14.5 V19.5 M18.5 14.5 V19.5 M4.5 19.5 V24.5 M13.5 19.5 V24.5 M23 19.5 V24.5" stroke="#c4c4c4" stroke-width="1"/>
<g transform="rotate(-8 14 13.5)"><rect x="4.5" y="12.5" width="12.5" height="5.5" rx="2.75" fill="none" stroke="#a3a3a3" stroke-width="2.4"/><rect x="11" y="9.5" width="12.5" height="5.5" rx="2.75" fill="none" stroke="#a3a3a3" stroke-width="2.4"/></g></g><g transform="translate(7,7.3)" stroke="#eeb440" stroke-width="1.8"><path d="M-6 0 H6 M0 -6 V6 M-4.3 -4.3 L4.3 4.3 M4.3 -4.3 L-4.3 4.3"/></g><circle cx="7" cy="7.3" r="2" fill="#f6f6f6"/></svg>
<svg style="position:absolute;left:387px;top:60px;" width="36" height="33" viewBox="0 0 36 33"><path d="M1.5 26 V1.5 H29" stroke="#8c8c8c" fill="none"/><g transform="translate(4,3)"><rect x="0.5" y="0.5" width="27" height="24" fill="#fdfdfd" stroke="#8c8c8c"/><rect x="0" y="0" width="28" height="5" fill="#737373"/>
<path d="M0.5 9.5 H27.5 M0.5 14.5 H27.5 M0.5 19.5 H27.5 M9 5 V9.5 M18.5 5 V9.5 M4.5 9.5 V14.5 M13.5 9.5 V14.5 M23 9.5 V14.5 M9 14.5 V19.5 M18.5 14.5 V19.5 M4.5 19.5 V24.5 M13.5 19.5 V24.5 M23 19.5 V24.5" stroke="#c4c4c4" stroke-width="1"/>
<g transform="rotate(-8 14 13.5)"><rect x="4.5" y="12.5" width="12.5" height="5.5" rx="2.75" fill="none" stroke="#a3a3a3" stroke-width="2.4"/><rect x="11" y="9.5" width="12.5" height="5.5" rx="2.75" fill="none" stroke="#a3a3a3" stroke-width="2.4"/></g></g><g transform="translate(26,24.5)"><path d="M-5.5 -0.5 A5.6 5.6 0 0 1 4.5 -3.5" stroke="#4e9a84" stroke-width="2.6" fill="none"/><path d="M5.5 0.5 A5.6 5.6 0 0 1 -4.5 3.5" stroke="#4e9a84" stroke-width="2.6" fill="none"/><path d="M2 -7 L7.5 -4.5 L3.5 0 Z" fill="#4e9a84"/><path d="M-2 7 L-7.5 4.5 L-3.5 0 Z" fill="#4e9a84"/></g></svg>
<svg style="position:absolute;left:448px;top:56px;" width="40" height="36" viewBox="0 0 40 36"><path d="M17.5 19 L23.5 12.5" stroke="#8c8c8c" stroke-width="1"/>
<rect x="6.5" y="14.5" width="11" height="11" fill="#fafafa" stroke="#8c8c8c"/><rect x="6" y="14" width="12" height="2.3" fill="#3c7dbf"/><path d="M9 19.5 H15 M9 22 H15" stroke="#9a9a9a"/>
<rect x="23.5" y="5.5" width="11" height="11" fill="#fafafa" stroke="#8c8c8c"/><rect x="23" y="5" width="12" height="2.3" fill="#3c7dbf"/><path d="M26 10.5 H32 M26 13 H32" stroke="#9a9a9a"/>
<rect x="21.5" y="29.5" width="10" height="4" fill="#fafafa" stroke="#9a9a9a"/>
<circle cx="26.3" cy="24" r="5.8" fill="#f6f6f6" stroke="#6e6e6e" stroke-width="2.2"/><path d="M30.5 28.5 L36.5 34" stroke="#6e6e6e" stroke-width="2.8" stroke-linecap="round"/></svg>
<svg style="position:absolute;left:518px;top:58px;" width="34" height="34" viewBox="0 0 34 34"><circle cx="13.3" cy="23.5" r="7.2" fill="#737373"/><circle cx="13.3" cy="23.5" r="8.4" fill="none" stroke="#737373" stroke-width="3.2" stroke-dasharray="3.826 2.771" transform="rotate(-78.75 13.3 23.5)"/><circle cx="13.3" cy="23.5" r="3.2" fill="#f3f3f3"/><circle cx="23.1" cy="10" r="5.2" fill="#737373"/><circle cx="23.1" cy="10" r="6.3" fill="none" stroke="#737373" stroke-width="2.6" stroke-dasharray="2.870 2.078" transform="rotate(-78.75 23.1 10)"/><circle cx="23.1" cy="10" r="2.2" fill="#f3f3f3"/></svg>
<div style="position:absolute;top:209.85px;font-size:20.5px;line-height:20.5px;color:#3a8660;white-space:pre;left:499.2px;transform:scaleX(0.9892);transform-origin:0 0;">PivotTable Fields</div>
<svg style="position:absolute;left:705px;top:214px;" width="9" height="5" viewBox="0 0 9 5"><path d="M0 0 H9 L4.5 4.8 Z" fill="#666"/></svg>
<svg style="position:absolute;left:722px;top:211px;" width="10" height="10" viewBox="0 0 10 10"><path d="M1 1 L9 9 M9 1 L1 9" stroke="#555" stroke-width="1.8"/></svg>
<div style="position:absolute;top:239.64px;font-size:12px;line-height:12px;color:#262626;white-space:pre;left:498.2px;transform:scaleX(0.8836);transform-origin:0 0;">ACTIVE</div>
<div style="position:absolute;left:549px;top:236px;width:1px;height:19px;background:#b8b8b8;"></div>
<div style="position:absolute;top:239.64px;font-size:12px;line-height:12px;color:#217346;white-space:pre;font-weight:bold;left:563.4px;transform:scaleX(0.8359);transform-origin:0 0;">ALL</div>
<div style="position:absolute;top:270.64px;font-size:12px;line-height:12px;color:#262626;white-space:pre;left:499.2px;transform:scaleX(0.9840);transform-origin:0 0;">Choose fields to add to report:</div>
<div style="position:absolute;left:687px;top:263px;width:44px;height:27px;background:#fdfdfd;box-sizing:border-box;border:1px solid #b9b9b9;"></div>
<svg style="position:absolute;left:697px;top:270px;" width="14" height="14" viewBox="0 0 14 14"><g transform="translate(7,7)"><rect x="-1.4" y="-7" width="2.8" height="3" fill="#9a9a9a" transform="rotate(0)"/><rect x="-1.4" y="-7" width="2.8" height="3" fill="#9a9a9a" transform="rotate(45)"/><rect x="-1.4" y="-7" width="2.8" height="3" fill="#9a9a9a" transform="rotate(90)"/><rect x="-1.4" y="-7" width="2.8" height="3" fill="#9a9a9a" transform="rotate(135)"/><rect x="-1.4" y="-7" width="2.8" height="3" fill="#9a9a9a" transform="rotate(180)"/><rect x="-1.4" y="-7" width="2.8" height="3" fill="#9a9a9a" transform="rotate(225)"/><rect x="-1.4" y="-7" width="2.8" height="3" fill="#9a9a9a" transform="rotate(270)"/><rect x="-1.4" y="-7" width="2.8" height="3" fill="#9a9a9a" transform="rotate(315)"/><circle r="5" fill="#9a9a9a"/><circle r="2" fill="#fdfdfd"/></g></svg>
<svg style="position:absolute;left:719px;top:275px;" width="8" height="4" viewBox="0 0 8 4"><path d="M0 0 H7.5 L3.75 4 Z" fill="#666"/></svg>
<div style="position:absolute;left:497px;top:303px;width:234px;height:173px;background:#fdfdfd;"></div>
<div style="position:absolute;left:715px;top:305px;width:16px;height:169px;background:#d5d5d5;box-sizing:border-box;border:1px solid #c6c6c6;border-right:none;"></div>
<div style="position:absolute;left:716px;top:306px;width:14px;height:14px;background:#fdfdfd;"></div>
<div style="position:absolute;left:715px;top:319px;width:16px;height:1px;background:#c6c6c6;"></div>
<svg style="position:absolute;left:719px;top:310px;" width="8" height="5" viewBox="0 0 8 5"><path d="M0 4.5 H8 L4 0 Z" fill="#707070"/></svg>
<div style="position:absolute;left:715px;top:335px;width:16px;height:84px;background:#fdfdfd;box-sizing:border-box;border:1px solid #b9b9b9;"></div>
<div style="position:absolute;left:715px;top:459px;width:16px;height:15px;background:#fdfdfd;box-sizing:border-box;border:1px solid #c6c6c6;"></div>
<svg style="position:absolute;left:719px;top:464px;" width="8" height="5" viewBox="0 0 8 5"><path d="M0 0 H8 L4 4.5 Z" fill="#707070"/></svg>
<svg style="position:absolute;left:502.5px;top:307.5px;" width="7" height="7" viewBox="0 0 7 7"><path d="M6.5 0.5 V6.5 H0.5 Z" fill="#505050"/></svg>
<svg style="position:absolute;left:514px;top:303px;" width="17" height="17" viewBox="0 0 17 17"><rect x="0.5" y="0.5" width="13" height="12" fill="#fff" stroke="#7a7a7a"/><rect x="0" y="0" width="14" height="2" fill="#6e6e6e"/><path d="M0.5 4.5 H13.5 M0.5 8.5 H13.5 M5.5 2 V12.5 M9.5 2 V12.5" stroke="#9a9a9a"/><path d="M8.6 6.5 V13.8 Q12.2 16.2 15.8 13.8 V6.5 Z" fill="#e8bd78"/><ellipse cx="12.2" cy="6.5" rx="3.6" ry="1.5" fill="#e8bd78"/><path d="M8.6 6.5 Q12.2 8.4 15.8 6.5" stroke="#f2d7a8" stroke-width="0.8" fill="none"/></svg>
<div style="position:absolute;top:305.14px;font-size:12px;line-height:12px;color:#262626;white-space:pre;font-weight:bold;left:533.2px;transform:scaleX(0.9375);transform-origin:0 0;">Events</div>
<svg style="position:absolute;left:520px;top:322.5px;" width="7" height="9" viewBox="0 0 7 9"><path d="M1 0.8 L6 4.5 L1 8.2 Z" fill="none" stroke="#606060" stroke-width="1"/></svg>
<svg style="position:absolute;left:533px;top:320px;" width="13" height="13" viewBox="0 0 13 13"><rect x="0.5" y="0.5" width="12" height="12" fill="#fff" stroke="#9a9a9a"/><path d="M2.8 6.8 L5.3 9.3 L10.2 3.6" stroke="#7a7a7a" stroke-width="1.2" fill="none"/></svg>
<div style="position:absolute;top:320.54px;font-size:12px;line-height:12px;color:#262626;white-space:pre;font-weight:bold;left:551.9px;transform:scaleX(0.8952);transform-origin:0 0;">SDE</div>
<svg style="position:absolute;left:520px;top:344px;" width="7" height="9" viewBox="0 0 7 9"><path d="M1 0.8 L6 4.5 L1 8.2 Z" fill="none" stroke="#606060" stroke-width="1"/></svg>
<svg style="position:absolute;left:532px;top:342px;" width="17" height="15" viewBox="0 0 17 15"><path d="M0 3 H3 L4.5 1.5 H10 V12 H0 Z" fill="#e9b96e"/><rect x="1.5" y="3.5" width="9" height="2" fill="#fff"/><path d="M2 5 H13 V9 H2 Z" fill="#e9b96e"/><rect x="4.5" y="7.5" width="11" height="7" fill="#fff" stroke="#555"/><path d="M6.5 11.8 H7.7 M9.3 11.8 H10.5 M12.1 11.8 H13.3" stroke="#333" stroke-width="1.3"/></svg>
<div style="position:absolute;top:342.34px;font-size:12px;line-height:12px;color:#262626;white-space:pre;left:551.3px;transform:scaleX(0.9619);transform-origin:0 0;">More Fields</div>
<svg style="position:absolute;left:502.5px;top:375.5px;" width="7" height="7" viewBox="0 0 7 7"><path d="M6.5 0.5 V6.5 H0.5 Z" fill="#505050"/></svg>
<svg style="position:absolute;left:515px;top:373px;" width="17" height="17" viewBox="0 0 17 17"><rect x="0.5" y="0.5" width="13" height="12" fill="#fff" stroke="#7a7a7a"/><rect x="0" y="0" width="14" height="2" fill="#6e6e6e"/><path d="M0.5 4.5 H13.5 M0.5 8.5 H13.5 M5.5 2 V12.5 M9.5 2 V12.5" stroke="#9a9a9a"/></svg>
<div style="position:absolute;top:373.04px;font-size:12px;line-height:12px;color:#262626;white-space:pre;font-weight:bold;left:533.2px;transform:scaleX(0.9237);transform-origin:0 0;">Hosts</div>
<svg style="position:absolute;left:520px;top:390.5px;" width="7" height="9" viewBox="0 0 7 9"><path d="M1 0.8 L6 4.5 L1 8.2 Z" fill="none" stroke="#606060" stroke-width="1"/></svg>
<svg style="position:absolute;left:533px;top:388px;" width="13" height="13" viewBox="0 0 13 13"><rect x="0.5" y="0.5" width="12" height="12" fill="#fff" stroke="#9a9a9a"/><path d="M2.8 6.8 L5.3 9.3 L10.2 3.6" stroke="#7a7a7a" stroke-width="1.2" fill="none"/></svg>
<div style="position:absolute;top:388.64px;font-size:12px;line-height:12px;color:#262626;white-space:pre;font-weight:bold;left:551.9px;transform:scaleX(0.9193);transform-origin:0 0;">Locations</div>
<svg style="position:absolute;left:520px;top:412.5px;" width="7" height="9" viewBox="0 0 7 9"><path d="M1 0.8 L6 4.5 L1 8.2 Z" fill="none" stroke="#606060" stroke-width="1"/></svg>
<svg style="position:absolute;left:532px;top:410px;" width="17" height="15" viewBox="0 0 17 15"><path d="M0 3 H3 L4.5 1.5 H10 V12 H0 Z" fill="#e9b96e"/><rect x="1.5" y="3.5" width="9" height="2" fill="#fff"/><path d="M2 5 H13 V9 H2 Z" fill="#e9b96e"/><rect x="4.5" y="7.5" width="11" height="7" fill="#fff" stroke="#555"/><path d="M6.5 11.8 H7.7 M9.3 11.8 H10.5 M12.1 11.8 H13.3" stroke="#333" stroke-width="1.3"/></svg>
<div style="position:absolute;top:410.84px;font-size:12px;line-height:12px;color:#262626;white-space:pre;left:551.3px;transform:scaleX(0.9619);transform-origin:0 0;">More Fields</div>
<svg style="position:absolute;left:503px;top:443px;" width="7" height="9" viewBox="0 0 7 9"><path d="M1 0.8 L6 4.5 L1 8.2 Z" fill="none" stroke="#606060" stroke-width="1"/></svg>
<svg style="position:absolute;left:514px;top:439px;" width="17" height="17" viewBox="0 0 17 17"><rect x="0.5" y="0.5" width="13" height="12" fill="#fff" stroke="#7a7a7a"/><rect x="0" y="0" width="14" height="2" fill="#6e6e6e"/><path d="M0.5 4.5 H13.5 M0.5 8.5 H13.5 M5.5 2 V12.5 M9.5 2 V12.5" stroke="#9a9a9a"/><path d="M8.6 6.5 V13.8 Q12.2 16.2 15.8 13.8 V6.5 Z" fill="#e8bd78"/><ellipse cx="12.2" cy="6.5" rx="3.6" ry="1.5" fill="#e8bd78"/><path d="M8.6 6.5 Q12.2 8.4 15.8 6.5" stroke="#f2d7a8" stroke-width="0.8" fill="none"/></svg>
<div style="position:absolute;top:441.14px;font-size:12px;line-height:12px;color:#262626;white-space:pre;font-weight:bold;left:533.2px;transform:scaleX(0.9512);transform-origin:0 0;">Medals</div>
<div style="position:absolute;left:497px;top:466px;width:218px;height:10px;overflow:hidden;"><svg style="position:absolute;left:6px;top:5px;" width="7" height="9" viewBox="0 0 7 9"><path d="M1 0.8 L6 4.5 L1 8.2 Z" fill="none" stroke="#606060"/></svg>
<svg style="position:absolute;left:18px;top:4px;" width="14" height="13" viewBox="0 0 14 13"><rect x="0.5" y="0.5" width="13" height="12" fill="#fff" stroke="#777"/><rect x="0" y="0" width="14" height="2.5" fill="#777"/></svg>
<div style="position:absolute;top:6.44px;font-size:12px;line-height:12px;color:#262626;white-space:pre;font-weight:bold;left:36.2px;">Sports</div>
</div>
<div style="position:absolute;left:499px;top:492px;width:235px;height:1px;background:repeating-linear-gradient(90deg,#a9a9a9 0 1px,transparent 1px 3px);"></div>
<div style="position:absolute;top:498.64px;font-size:12px;line-height:12px;color:#262626;white-space:pre;left:501.3px;transform:scaleX(0.9654);transform-origin:0 0;">Drag fields between areas below:</div>
<svg style="position:absolute;left:504px;top:531px;" width="12" height="12" viewBox="0 0 12 12"><path d="M0 0 H11.5 L7.3 5 V11.5 H4.2 V5 Z" fill="#8a8a8a"/></svg>
<div style="position:absolute;top:531.84px;font-size:12px;line-height:12px;color:#262626;white-space:pre;left:523.5px;transform:scaleX(0.8359);transform-origin:0 0;">FILTERS</div>
<div style="position:absolute;left:500px;top:549px;width:109px;height:63px;background:#fdfdfd;"></div>
<div style="position:absolute;left:501px;top:551px;width:107px;height:19px;background:#fdfdfd;box-sizing:border-box;border:1px solid #d6d6d6;"></div>
<div style="position:absolute;top:555.04px;font-size:12px;line-height:12px;color:#262626;white-space:pre;left:508.3px;transform:scaleX(0.9851);transform-origin:0 0;">Medal</div>
<svg style="position:absolute;left:590.5px;top:558px;" width="8" height="4" viewBox="0 0 8 4"><path d="M0 0 H8 L4 4 Z" fill="#111"/></svg>
<svg style="position:absolute;left:623px;top:533px;" width="10" height="9" viewBox="0 0 10 9"><path d="M0.5 0 V9 M3 0 V9 M5.5 0 V9 M8 0 V9" stroke="#8a8a8a" stroke-width="1.2"/></svg>
<div style="position:absolute;top:531.84px;font-size:12px;line-height:12px;color:#262626;white-space:pre;left:641.5px;transform:scaleX(0.9481);transform-origin:0 0;">COLUMNS</div>
<div style="position:absolute;left:618px;top:549px;width:114px;height:63px;background:#fdfdfd;"></div>
<div style="position:absolute;left:619px;top:551px;width:111px;height:19px;background:#fdfdfd;box-sizing:border-box;border:1px solid #d6d6d6;"></div>
<div style="position:absolute;top:555.04px;font-size:12px;line-height:12px;color:#262626;white-space:pre;left:626.6px;transform:scaleX(0.9771);transform-origin:0 0;">Locations</div>
<svg style="position:absolute;left:713px;top:558px;" width="8" height="4" viewBox="0 0 8 4"><path d="M0 0 H8 L4 4 Z" fill="#111"/></svg>
<svg style="position:absolute;left:504px;top:628px;" width="12" height="10" viewBox="0 0 12 10"><path d="M0 0.5 H11 M0 3 H11 M0 5.5 H11 M0 8 H11" stroke="#8a8a8a" stroke-width="1.2"/></svg>
<div style="position:absolute;top:627.84px;font-size:12px;line-height:12px;color:#262626;white-space:pre;left:523.5px;transform:scaleX(0.8730);transform-origin:0 0;">ROWS</div>
<div style="position:absolute;left:500px;top:645px;width:109px;height:63px;background:#fdfdfd;"></div>
<div style="position:absolute;left:501px;top:647px;width:107px;height:19px;background:#fdfdfd;box-sizing:border-box;border:1px solid #d6d6d6;"></div>
<div style="position:absolute;top:651.04px;font-size:12px;line-height:12px;color:#262626;white-space:pre;left:508.3px;transform:scaleX(0.8061);transform-origin:0 0;">SDE</div>
<svg style="position:absolute;left:590.5px;top:654px;" width="8" height="4" viewBox="0 0 8 4"><path d="M0 0 H8 L4 4 Z" fill="#111"/></svg>
<svg style="position:absolute;left:623px;top:628px;" width="10" height="10" viewBox="0 0 10 10"><path d="M9 1 H1 L5 5 L1 9 H9" stroke="#8a8a8a" stroke-width="1.2" fill="none"/></svg>
<div style="position:absolute;top:627.84px;font-size:12px;line-height:12px;color:#262626;white-space:pre;left:641.5px;transform:scaleX(0.8866);transform-origin:0 0;">VALUES</div>
<div style="position:absolute;left:618px;top:645px;width:114px;height:63px;background:#fdfdfd;"></div>
<div style="position:absolute;left:619px;top:647px;width:111px;height:19px;background:#fdfdfd;box-sizing:border-box;border:1px solid #d6d6d6;"></div>
<div style="position:absolute;top:651.04px;font-size:12px;line-height:12px;color:#262626;white-space:pre;left:626.6px;transform:scaleX(1.0026);transform-origin:0 0;">Count of Medal</div>
<svg style="position:absolute;left:713px;top:654px;" width="8" height="4" viewBox="0 0 8 4"><path d="M0 0 H8 L4 4 Z" fill="#111"/></svg>
<div style="position:absolute;left:500px;top:733px;width:13px;height:13px;background:#fff;box-sizing:border-box;border:1px solid #ababab;"></div>
<div style="position:absolute;top:734.14px;font-size:12px;line-height:12px;color:#262626;white-space:pre;left:519.3px;transform:scaleX(0.9725);transform-origin:0 0;">Defer Layout Update</div>
<div style="position:absolute;left:679px;top:729px;width:52px;height:21px;background:#fbfbfb;"></div>
<div style="position:absolute;top:734.14px;font-size:12px;line-height:12px;color:#7a7a7a;white-space:pre;left:405.29999999999995px;width:600px;text-align:center;"><span style="display:inline-block;transform:scaleX(0.9122);transform-origin:50% 0">UPDATE</span></div>
<svg style="position:absolute;left:28px;top:743px;" width="6" height="8" viewBox="0 0 6 8"><path d="M5.5 0 V8 L0.5 4 Z" fill="#bdbdbd"/></svg>
<svg style="position:absolute;left:57px;top:743px;" width="6" height="8" viewBox="0 0 6 8"><path d="M0.5 0 V8 L5.5 4 Z" fill="#555"/></svg>
<div style="position:absolute;left:101px;top:733px;width:66px;height:25px;background:#ffffff;box-sizing:border-box;border:1px solid #c6c6c6;border-bottom:none;"></div>
<div style="position:absolute;left:101px;top:756px;width:66px;height:2px;background:#217346;"></div>
<div style="position:absolute;top:740.00px;font-size:13px;line-height:13px;color:#217346;white-space:pre;font-weight:bold;left:-167px;width:600px;text-align:center;"><span style="display:inline-block;transform:scaleX(0.9381);transform-origin:50% 0">Sheet1</span></div>
<div style="position:absolute;top:740.00px;font-size:13px;line-height:13px;color:#262626;white-space:pre;left:178.3px;transform:scaleX(0.9820);transform-origin:0 0;">Sports</div>
<div style="position:absolute;top:740.00px;font-size:13px;line-height:13px;color:#262626;white-space:pre;left:230px;">...</div>
<svg style="position:absolute;left:255px;top:739px;" width="17" height="17" viewBox="0 0 17 17"><circle cx="8.5" cy="8.5" r="7.6" fill="none" stroke="#555" stroke-width="1.3"/><path d="M4.5 8.5 H12.5 M8.5 4.5 V12.5" stroke="#555" stroke-width="1.6"/></svg>
<svg style="position:absolute;left:291px;top:741px;" width="3" height="11" viewBox="0 0 3 11"><circle cx="1.5" cy="1.3" r="1.1" fill="#666"/><circle cx="1.5" cy="5.5" r="1.1" fill="#666"/><circle cx="1.5" cy="9.7" r="1.1" fill="#666"/></svg>
<div style="position:absolute;left:308px;top:740px;width:156px;height:15px;background:#c6c6c6;box-sizing:border-box;border:1px solid #c6c6c6;"></div>
<div style="position:absolute;left:309px;top:741px;width:14px;height:13px;background:#fff;"></div>
<div style="position:absolute;left:324px;top:741px;width:29px;height:13px;background:#fff;"></div>
<div style="position:absolute;left:450px;top:741px;width:13px;height:13px;background:#fff;"></div>
<svg style="position:absolute;left:313px;top:744px;" width="5" height="8" viewBox="0 0 5 8"><path d="M4.5 0 V8 L0.5 4 Z" fill="#666"/></svg>
<svg style="position:absolute;left:454px;top:744px;" width="5" height="8" viewBox="0 0 5 8"><path d="M0.5 0 V8 L4.5 4 Z" fill="#666"/></svg>
<div style="position:absolute;left:0px;top:761px;width:746px;height:23px;background:#333333;"></div>
<div style="position:absolute;top:767.09px;font-size:11px;line-height:11px;color:#f0f0f0;white-space:pre;left:8.4px;transform:scaleX(0.8600);transform-origin:0 0;">READY</div>
<div style="position:absolute;left:442px;top:761px;width:38px;height:23px;background:#000;"></div>
<svg style="position:absolute;left:454px;top:765px;" width="13" height="13" viewBox="0 0 13 13"><path d="M0.5 0.5 H12.5 V12.5 H0.5 Z M4.5 0.5 V12.5 M8.5 0.5 V12.5 M0.5 4.5 H12.5 M0.5 8.5 H12.5" stroke="#fff" stroke-width="1" fill="none"/></svg>
<svg style="position:absolute;left:492px;top:765px;" width="14" height="13" viewBox="0 0 14 13"><rect x="0.5" y="0.5" width="13" height="12" fill="none" stroke="#e6e6e6"/><rect x="3.5" y="2.5" width="7" height="8" fill="none" stroke="#e6e6e6"/><path d="M5 5 H9 M5 7 H9" stroke="#e6e6e6"/></svg>
<svg style="position:absolute;left:530px;top:765px;" width="15" height="13" viewBox="0 0 15 13"><rect x="0.5" y="0.5" width="14" height="12" fill="none" stroke="#e6e6e6"/><rect x="1" y="1" width="6.5" height="7" fill="#e6e6e6"/><rect x="9" y="1" width="5" height="9" fill="#e6e6e6"/></svg>
<div style="position:absolute;left:561px;top:771px;width:6px;height:2px;background:#e6e6e6;"></div>
<div style="position:absolute;left:571px;top:771px;width:100px;height:1px;background:#e6e6e6;"></div>
<div style="position:absolute;left:619px;top:766px;width:4px;height:11px;background:#e6e6e6;"></div>
<svg style="position:absolute;left:675px;top:767px;" width="9" height="9" viewBox="0 0 9 9"><path d="M0 4.5 H9 M4.5 0 V9" stroke="#e6e6e6" stroke-width="1.8"/></svg>
<div style="position:absolute;top:766.27px;font-size:11.5px;line-height:11.5px;color:#f0f0f0;white-space:pre;left:698.6px;transform:scaleX(0.9211);transform-origin:0 0;">100%</div>
</body></html>
